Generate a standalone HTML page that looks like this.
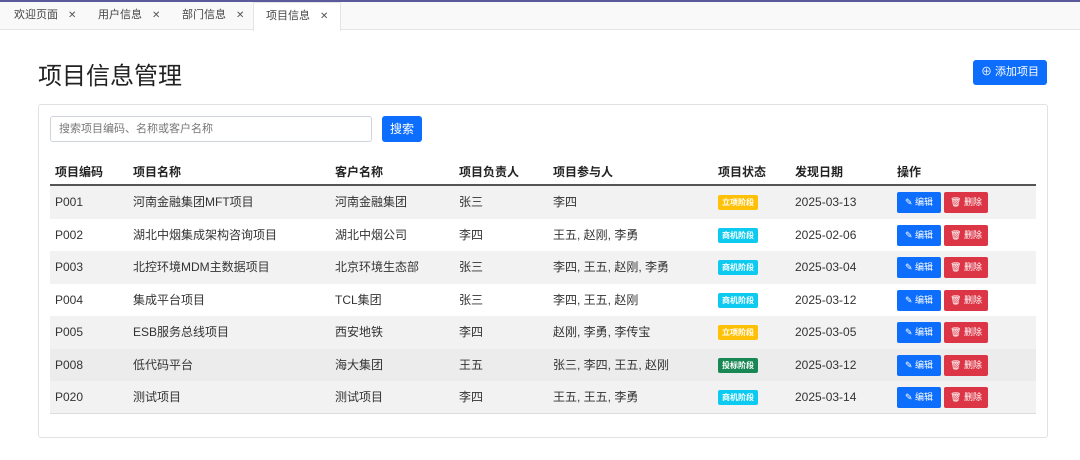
<!DOCTYPE html><html><head><meta charset="utf-8"><style>
*{box-sizing:border-box;margin:0;padding:0}
body{width:1080px;height:460px;overflow:hidden;background:#fff;font-family:"Liberation Sans","Noto Sans CJK SC",sans-serif;color:#212529;position:relative}
.topline{position:absolute;left:0;top:0;width:1080px;height:2px;background:#5b5b9b}
.tabs{position:absolute;top:2px;left:0;width:1080px;height:28px;background:#f9f9f9;border-bottom:1px solid #e5e5e5}
.tab{position:absolute;top:0;height:28px;line-height:27px;font-size:11px;color:#444}
.tab i{font-style:normal;font-size:10px;margin-left:10px;color:#555}
.tab.act{background:#fff;border:1px solid #e5e5e5;border-bottom:none;height:29px}
h1{position:absolute;left:38px;top:56px;font-size:24px;font-weight:normal;color:#222}
.add{position:absolute;left:973px;top:60px;width:74px;height:25px;background:#0d6efd;color:#fff;border-radius:3px;font-size:11px;line-height:25px;text-align:center}
.card{position:absolute;left:38px;top:104px;width:1010px;height:334px;border:1px solid #e2e2e2;border-radius:3px}
.inp{position:absolute;left:50px;top:116px;width:322px;height:26px;border:1px solid #ced4da;border-radius:3px;font-size:11px;color:#777;line-height:24px;padding-left:8px}
.sb{position:absolute;left:382px;top:116px;width:40px;height:26px;background:#0d6efd;color:#fff;border-radius:3px;font-size:12px;line-height:26px;text-align:center}
.row{position:absolute;left:50px;width:986px;height:33px;font-size:12px;line-height:33px;color:#333}
.row.s{background:#f2f2f2}
.row span{position:absolute;top:0;white-space:nowrap}
.hd{font-weight:bold;font-size:12px;border-bottom:2px solid #555;height:26px;line-height:24px;color:#222}
.badge{display:inline-block;height:15px;line-height:15px;font-size:8px;color:#fff;padding:0 4px;border-radius:2px;vertical-align:middle}
.y{background:#ffc107}.c{background:#0dcaf0}.g{background:#198754}
.b{position:absolute;top:6px;height:21px;line-height:21px;font-size:9px;color:#fff;border-radius:2px;text-align:center}
.e{left:847px;width:44px;background:#0d6efd}.d{left:894px;width:44px;background:#dc3545}
</style></head><body>
<div class="topline"></div>
<div class="tabs">
<div class="tab" style="left:14px">欢迎页面<i>✕</i></div>
<div class="tab" style="left:98px">用户信息<i>✕</i></div>
<div class="tab" style="left:182px">部门信息<i>✕</i></div>
<div class="tab act" style="left:253px;padding:0 12px">项目信息<i>✕</i></div>
</div>
<h1>项目信息管理</h1>
<div class="add">⊕ 添加项目</div>
<div class="card"></div>
<div class="inp">搜索项目编码、名称或客户名称</div>
<div class="sb">搜索</div>
<div class="row hd" style="top:160px"><span style="left:5px">项目编码</span><span style="left:83px">项目名称</span><span style="left:285px">客户名称</span><span style="left:409px">项目负责人</span><span style="left:503px">项目参与人</span><span style="left:668px">项目状态</span><span style="left:745px">发现日期</span><span style="left:847px">操作</span></div>
<div class="row s" style="top:186px"><span style="left:5px">P001</span><span style="left:83px">河南金融集团MFT项目</span><span style="left:285px">河南金融集团</span><span style="left:409px">张三</span><span style="left:503px">李四</span><span style="left:668px"><b class="badge y">立项阶段</b></span><span style="left:745px">2025-03-13</span><div class="b e">✎ 编辑</div><div class="b d">🗑 删除</div></div>
<div class="row" style="top:219px"><span style="left:5px">P002</span><span style="left:83px">湖北中烟集成架构咨询项目</span><span style="left:285px">湖北中烟公司</span><span style="left:409px">李四</span><span style="left:503px">王五, 赵刚, 李勇</span><span style="left:668px"><b class="badge c">商机阶段</b></span><span style="left:745px">2025-02-06</span><div class="b e">✎ 编辑</div><div class="b d">🗑 删除</div></div>
<div class="row s" style="top:251px"><span style="left:5px">P003</span><span style="left:83px">北控环境MDM主数据项目</span><span style="left:285px">北京环境生态部</span><span style="left:409px">张三</span><span style="left:503px">李四, 王五, 赵刚, 李勇</span><span style="left:668px"><b class="badge c">商机阶段</b></span><span style="left:745px">2025-03-04</span><div class="b e">✎ 编辑</div><div class="b d">🗑 删除</div></div>
<div class="row" style="top:284px"><span style="left:5px">P004</span><span style="left:83px">集成平台项目</span><span style="left:285px">TCL集团</span><span style="left:409px">张三</span><span style="left:503px">李四, 王五, 赵刚</span><span style="left:668px"><b class="badge c">商机阶段</b></span><span style="left:745px">2025-03-12</span><div class="b e">✎ 编辑</div><div class="b d">🗑 删除</div></div>
<div class="row s" style="top:316px"><span style="left:5px">P005</span><span style="left:83px">ESB服务总线项目</span><span style="left:285px">西安地铁</span><span style="left:409px">李四</span><span style="left:503px">赵刚, 李勇, 李传宝</span><span style="left:668px"><b class="badge y">立项阶段</b></span><span style="left:745px">2025-03-05</span><div class="b e">✎ 编辑</div><div class="b d">🗑 删除</div></div>
<div class="row" style="top:349px;background:#ececec"><span style="left:5px">P008</span><span style="left:83px">低代码平台</span><span style="left:285px">海大集团</span><span style="left:409px">王五</span><span style="left:503px">张三, 李四, 王五, 赵刚</span><span style="left:668px"><b class="badge g">投标阶段</b></span><span style="left:745px">2025-03-12</span><div class="b e">✎ 编辑</div><div class="b d">🗑 删除</div></div>
<div class="row s" style="top:381px;border-bottom:1px solid #ddd"><span style="left:5px">P020</span><span style="left:83px">测试项目</span><span style="left:285px">测试项目</span><span style="left:409px">李四</span><span style="left:503px">王五, 王五, 李勇</span><span style="left:668px"><b class="badge c">商机阶段</b></span><span style="left:745px">2025-03-14</span><div class="b e">✎ 编辑</div><div class="b d">🗑 删除</div></div>
</body></html>
